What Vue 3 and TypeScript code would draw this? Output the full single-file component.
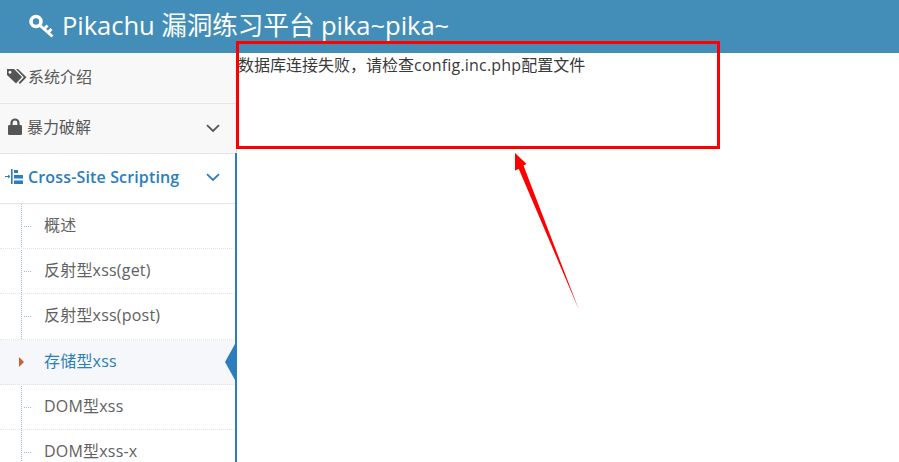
<script setup lang="ts">
const items: { label: string; active?: boolean }[] = [
  { label: '概述' },
  { label: '反射型xss(get)' },
  { label: '反射型xss(post)' },
  { label: '存储型xss', active: true },
  { label: 'DOM型xss' },
  { label: 'DOM型xss-x' },
]
</script>

<template>
  <div class="page">
    <header class="navbar">
      <svg class="key" width="26" height="24" viewBox="0 0 26 24">
        <circle cx="7" cy="7.5" r="5" fill="none" stroke="#fff" stroke-width="3.6" />
        <path d="M10.5 11 L23.5 22.5 M19 18.5 L22.5 15 M15 15 L18.5 11.5" fill="none" stroke="#fff" stroke-width="3" />
      </svg>
      <span class="brand">Pikachu 漏洞练习平台 pika~pika~</span>
    </header>
    <div class="body">
      <nav class="sidebar">
        <div class="menu-row first">
          <svg class="ico" width="20" height="17" viewBox="0 0 20 17">
            <path d="M0 1 L7 1 L15 9 L9 15.5 L0 7 Z M3 2.8 a1.5 1.5 0 1 0 .01 0 Z" fill="#555" fill-rule="evenodd" />
            <path d="M9 1 L11 1 L19.5 9.3 L13 16 L11.6 14.8 L16.8 9.2 Z" fill="#555" />
          </svg>
          <span class="tags-label">系统介绍</span>
        </div>
        <div class="menu-row second">
          <svg class="ico" width="16" height="17" viewBox="0 0 16 17">
            <path d="M4.5 8 V5 a3.5 3.5 0 0 1 7 0 V8" fill="none" stroke="#555" stroke-width="2.2" />
            <rect x="1" y="7" width="14" height="10" rx="1.2" fill="#555" />
          </svg>
          <span class="lock-label">暴力破解</span>
          <svg class="chev" width="14" height="9" viewBox="0 0 14 9">
            <path d="M1 1.2 L7 7 L13 1.2" fill="none" stroke="#555" stroke-width="1.8" />
          </svg>
        </div>
        <div class="menu-row open">
          <svg class="ico" width="18" height="15" viewBox="0 0 18 15">
            <path d="M0 7.5 H4 M3 6 L5 7.5 L3 9" fill="none" stroke="#2b7dbc" stroke-width="1" />
            <rect x="6" y="0" width="1.6" height="15" fill="#2b7dbc" />
            <path d="M9 1 H13 V4 H9 Z M9 6 H18 V9.5 H9 Z M9 11.5 H18 V15 H9 Z" fill="#2b7dbc" />
          </svg>
          <span class="open-label">Cross-Site Scripting</span>
          <svg class="chev" width="14" height="9" viewBox="0 0 14 9">
            <path d="M1 1.2 L7 7 L13 1.2" fill="none" stroke="#2b7dbc" stroke-width="1.8" />
          </svg>
        </div>
        <ul class="submenu">
          <li v-for="item in items" :key="item.label" class="sub" :class="{ active: item.active }">
            <span class="dash" />
            <span v-if="item.active" class="caret" />
            {{ item.label }}
            <span v-if="item.active" class="pointer" />
          </li>
        </ul>
      </nav>
      <main class="content">数据库连接失败，请检查<span class="latin">config.inc.php</span>配置文件</main>
    </div>
    <div class="callout" />
    <svg class="arrow" width="70" height="162" viewBox="0 0 70 162">
      <path d="M1 1 L12.5 12 L9.5 13.5 L65 158 L4.8 17 L1 18.5 Z" fill="#ff0000" />
    </svg>
  </div>
</template>

<style>
html, body { margin: 0; background: #fff; overflow: hidden; }
</style>

<style scoped>
.page {
  position: relative;
  width: 899px;
  height: 462px;
  overflow: hidden;
  font-family: "Open Sans", "Noto Sans CJK SC", sans-serif;
  font-size: 16px;
  color: #393939;
}
.navbar {
  height: 53px;
  background: #438eb9;
  display: flex;
  align-items: center;
  padding-left: 29px;
  box-sizing: border-box;
  color: #fff;
}
.key { margin-right: 7px; flex: none; position: relative; top: -1px; }
.brand { font-size: 25.6px; letter-spacing: -0.07px; line-height: 50px; position: relative; top: -1px; }
.body { display: flex; height: 409px; }
.sidebar {
  width: 237px;
  flex: none;
  box-sizing: border-box;
  border-right: 1px solid #ddd;
  background: #fff;
  position: relative;
}
.menu-row {
  height: 50px;
  box-sizing: border-box;
  background: #f8f8f8;
  border-bottom: 1px solid #e5e5e5;
  display: flex;
  align-items: center;
  padding-left: 7px;
  padding-bottom: 4px;
  color: #585858;
  position: relative;
}
.first { height: 51px; }
.second { padding-bottom: 5px; }
.ico { flex: none; }
.tags-label { margin-left: 1px; }
.lock-label { margin-left: 4px; }
.open-label { margin-left: 5px; font-weight: 600; color: #2b7dbc; letter-spacing: 0.15px; }
.chev { position: absolute; right: 16px; top: 20px; }
.open { background: #fff; }
.open .ico { margin-left: -2px; }
.open .chev { top: 19px; }
.submenu {
  list-style: none;
  margin: 0;
  padding: 0;
  position: relative;
}
.submenu::before {
  content: "";
  position: absolute;
  left: 21px;
  top: 0;
  bottom: 0;
  border-left: 1px dotted #9dbdd6;
}
.sub {
  height: 45.2px;
  box-sizing: border-box;
  border-bottom: 1px dotted #e4e4e4;
  padding-left: 44px;
  padding-bottom: 4px;
  display: flex;
  align-items: center;
  color: #616161;
  letter-spacing: 0.2px;
  position: relative;
}
.sub.active {
  background: #f5f7fa;
  color: #2b7dbc;
}
.dash {
  position: absolute;
  left: 24px;
  top: 50%;
  width: 7px;
  border-top: 1px dotted #9dbdd6;
}
.active .dash { display: none; }
.caret {
  position: absolute;
  left: 19px;
  top: 50%;
  margin-top: -5px;
  border-left: 5px solid #c86139;
  border-top: 5px solid transparent;
  border-bottom: 5px solid transparent;
}
.pointer {
  position: absolute;
  right: 1px;
  top: 50%;
  margin-top: -18px;
  border-right: 10px solid #2b7dbc;
  border-top: 18px solid transparent;
  border-bottom: 18px solid transparent;
}
.sidebar::after {
  content: "";
  position: absolute;
  top: 100px;
  right: -1px;
  bottom: 0;
  width: 2px;
  background: #2b7dbc;
}
.content {
  flex: 1;
  padding-left: 1px;
  line-height: 24px;
  color: #393939;
}
.latin { letter-spacing: 0.2px; }
.callout {
  position: absolute;
  left: 236px;
  top: 41px;
  width: 484px;
  height: 108px;
  box-sizing: border-box;
  border: 3px solid #ff0000;
}
.arrow {
  position: absolute;
  left: 514px;
  top: 152px;
}
</style>
